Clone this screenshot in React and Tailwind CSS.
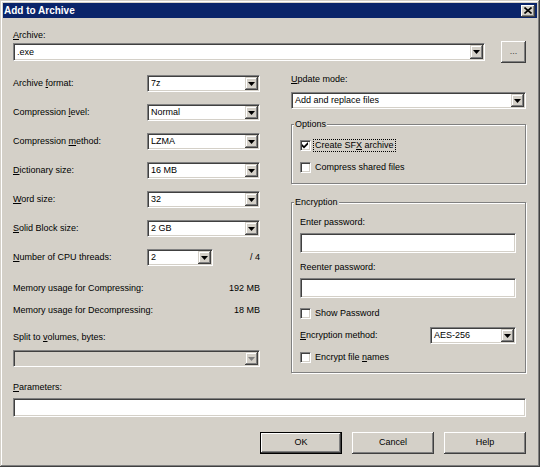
import React from 'react';

const sunken =
  'border border-t-[#808080] border-l-[#808080] border-r-white border-b-white shadow-[inset_1px_1px_0_#404040,inset_-1px_-1px_0_#d4d0c8]';
const raised =
  'bg-[#d4d0c8] shadow-[inset_-1px_-1px_0_#404040,inset_1px_1px_0_#d4d0c8,inset_-2px_-2px_0_#808080,inset_2px_2px_0_#fff]';
const raisedBtn =
  'bg-[#d4d0c8] shadow-[inset_-1px_-1px_0_#404040,inset_1px_1px_0_#fff,inset_-2px_-2px_0_#808080,inset_2px_2px_0_#d4d0c8]';

function Arrow({ disabled }) {
  return (
    <svg width="7" height="4" viewBox="0 0 7 4">
      <path d="M0 0h7L3.5 4z" fill={disabled ? '#808080' : '#000'} />
    </svg>
  );
}

function Combo({ value, className = '', disabled, h = 'h-[17px]' }) {
  return (
    <div className={`${sunken} ${disabled ? 'bg-[#d4d0c8]' : 'bg-white'} ${h} flex items-center p-[1px] ${className}`}>
      <span className="flex-1 pl-[2px] leading-[11px] truncate">{value}</span>
      <div className={`${raised} w-[13px] h-full flex items-center justify-center`}>
        <Arrow disabled={disabled} />
      </div>
    </div>
  );
}

function Check({ checked, label, focused }) {
  return (
    <div className="flex items-center h-[13px] gap-[2px]">
      <div className={`${sunken} bg-white w-[11px] h-[11px] flex items-center justify-center`}>
        {checked && (
          <svg width="7" height="7" viewBox="0 0 7 7">
            <polygon points="0,2 2,4 6,0 6,2.5 2,6.5 0,4.5" fill="#000" />
          </svg>
        )}
      </div>
      <span
        className={`leading-[11px] px-[1px] border ${focused ? 'border-dotted border-black' : 'border-transparent'}`}
      >
        {label}
      </span>
    </div>
  );
}

function Btn({ children, isDefault }) {
  return (
    <div
      className={`w-[82px] h-[22px] flex items-center justify-center ${
        isDefault
          ? 'border border-black bg-[#d4d0c8] shadow-[inset_-1px_-1px_0_#404040,inset_1px_1px_0_#fff,inset_-2px_-2px_0_#808080]'
          : raisedBtn
      }`}
    >
      {children}
    </div>
  );
}

function Row({ label, value }) {
  return (
    <div className="flex items-center h-[17px]">
      <span className="w-[134px] leading-[11px]">{label}</span>
      <Combo value={value} className="w-[113px]" />
    </div>
  );
}

export default function App() {
  return (
    <div className="w-[540px] h-[467px] bg-[#d4d0c8] p-[3px] flex flex-col text-[9px] text-black font-['Liberation_Sans',Arial,sans-serif] shadow-[inset_-1px_-1px_0_#404040,inset_1px_1px_0_#d4d0c8,inset_-2px_-2px_0_#808080,inset_2px_2px_0_#fff]">
      {/* title bar */}
      <div className="h-[15px] bg-[#0a246a] flex items-center justify-between pl-[1px] pr-[2px]">
        <span className="text-white font-bold text-[10px] leading-[12px]">Add to Archive</span>
        <div className={`${raisedBtn} w-[14px] h-[12px] flex items-center justify-center`}>
          <svg width="8" height="7" viewBox="0 0 8 7">
            <path d="M0.5 0.5L7.5 6.5M7.5 0.5L0.5 6.5" stroke="#000" strokeWidth="1.6" />
          </svg>
        </div>
      </div>

      <div className="flex flex-col pl-[10px] pr-[11px]">
        <span className="mt-[12px] leading-[11px]">
          <u>A</u>rchive:
        </span>
        <div className="flex items-center justify-between h-[22px]">
          <Combo value=".exe" className="w-[472px]" h="h-[18px]" />
          <div className={`${raisedBtn} w-[25px] h-[22px] flex items-center justify-center text-[#404040]`}>...</div>
        </div>

        <div className="flex justify-between mt-[11px]">
          {/* left column */}
          <div className="w-[247px] flex flex-col">
            <div className="flex flex-col gap-[12px] pt-[1px]">
              <Row label={<>Archive <u>f</u>ormat:</>} value="7z" />
              <Row label={<>Compression <u>l</u>evel:</>} value="Normal" />
              <Row label={<>Compression <u>m</u>ethod:</>} value="LZMA" />
              <Row label={<><u>D</u>ictionary size:</>} value="16 MB" />
              <Row label={<><u>W</u>ord size:</>} value="32" />
              <Row label={<><u>S</u>olid Block size:</>} value="2 GB" />
              <div className="flex items-center h-[17px]">
                <span className="w-[134px] leading-[11px]">
                  <u>N</u>umber of CPU threads:
                </span>
                <Combo value="2" className="w-[66px]" />
                <span className="flex-1 text-right leading-[11px]">/ 4</span>
              </div>
            </div>
            <div className="flex justify-between leading-[11px] mt-[17px]">
              <span>Memory usage for Compressing:</span>
              <span>192 MB</span>
            </div>
            <div className="flex justify-between leading-[11px] mt-[11px]">
              <span>Memory usage for Decompressing:</span>
              <span>18 MB</span>
            </div>
            <span className="leading-[11px] mt-[16px]">
              Split to <u>v</u>olumes, bytes:
            </span>
            <Combo value="" disabled className="w-full mt-[7px]" />
          </div>

          {/* right column */}
          <div className="w-[235px] flex flex-col">
            <span className="leading-[11px]">
              <u>U</u>pdate mode:
            </span>
            <Combo value="Add and replace files" className="w-full mt-[7px]" />

            <fieldset className="mt-[10px] border border-[#808080] shadow-[inset_1px_1px_0_#fff,1px_1px_0_#fff]">
              <legend className="ml-[2px] px-[1px] leading-[11px] bg-[#d4d0c8]">Options</legend>
              <div className="flex flex-col pl-[8px] pb-[9px]">
                <div className="mt-[9px]">
                  <Check checked focused label={<>Create SF<u>X</u> archive</>} />
                </div>
                <div className="mt-[9px]">
                  <Check label="Compress shared files" />
                </div>
              </div>
            </fieldset>

            <fieldset className="mt-[13px] border border-[#808080] shadow-[inset_1px_1px_0_#fff,1px_1px_0_#fff]">
              <legend className="ml-[2px] px-[1px] leading-[11px] bg-[#d4d0c8]">Encryption</legend>
              <div className="flex flex-col pl-[8px] pr-[9px] pb-[8px]">
                <span className="mt-[9px] leading-[11px]">Enter password:</span>
                <div className={`${sunken} bg-white h-[20px] mt-[5px]`} />
                <span className="mt-[9px] leading-[11px]">Reenter password:</span>
                <div className={`${sunken} bg-white h-[20px] mt-[5px]`} />
                <div className="mt-[9px]">
                  <Check label="Show Password" />
                </div>
                <div className="mt-[7px] flex items-center justify-between h-[17px]">
                  <span className="leading-[11px]">
                    <u>E</u>ncryption method:
                  </span>
                  <Combo value="AES-256" className="w-[86px]" />
                </div>
                <div className="mt-[7px]">
                  <Check label={<>Encrypt file <u>n</u>ames</>} />
                </div>
              </div>
            </fieldset>
          </div>
        </div>

        <span className="mt-[9px] leading-[11px]">
          <u>P</u>arameters:
        </span>
        <div className={`${sunken} bg-white h-[19px] mt-[5px]`} />

        <div className="flex justify-end gap-[10px] mt-[15px]">
          <Btn isDefault>OK</Btn>
          <Btn>Cancel</Btn>
          <Btn>Help</Btn>
        </div>
      </div>
    </div>
  );
}
